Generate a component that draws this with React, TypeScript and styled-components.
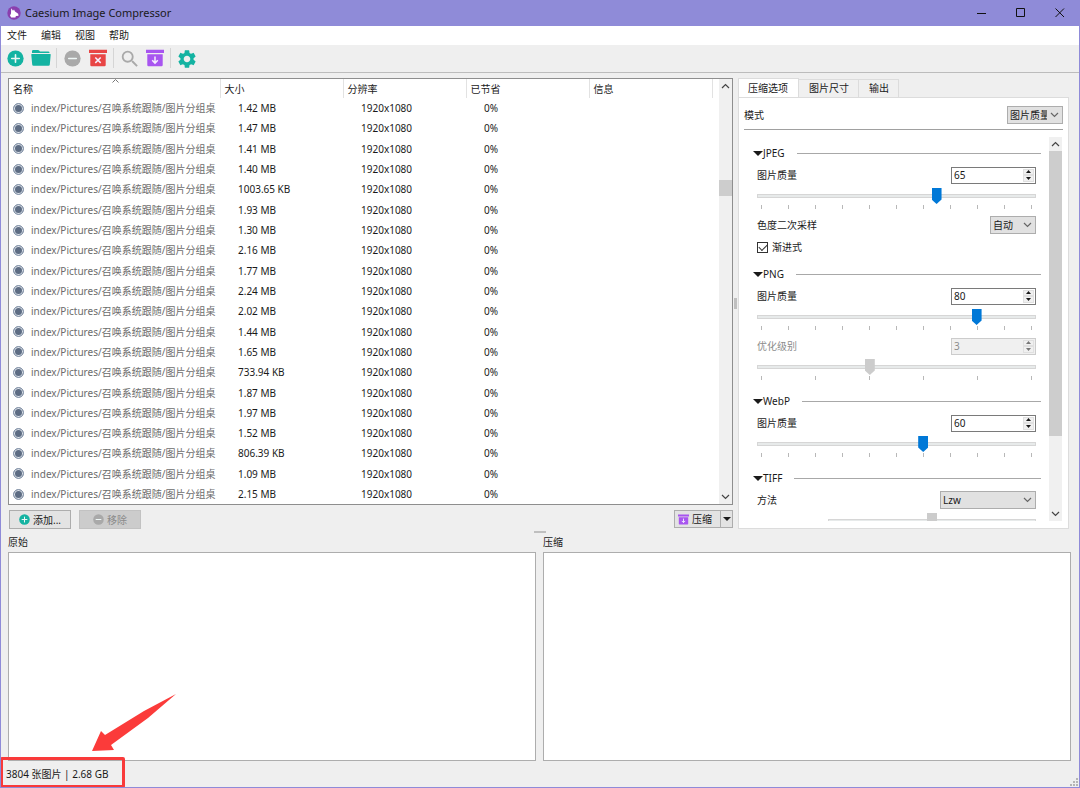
import React, { useState } from 'react';
import styled, { createGlobalStyle, css } from 'styled-components';
import { MdSettings, MdSearch } from 'react-icons/md';

const GlobalStyle = createGlobalStyle`
  * { box-sizing: border-box; }
  body { margin: 0; }
  body, button, input, select {
    font-family: "Noto Sans", "Noto Sans CJK SC", sans-serif;
    font-size: 10px;
    line-height: 14px;
    color: #1a1a1a;
  }
  button, input, select { margin: 0; padding: 0; border: 0; border-radius: 0; background: none; }
`;

const teal = '#14b3a2';
const violet = '#a855f0';
const red = '#e84545';
const grey = '#a9a9a9';

const Window = styled.div`
  display: flex;
  flex-direction: column;
  height: 100vh;
  min-height: 640px;
  min-width: 860px;
  overflow: hidden;
  background: #efefef;
  border: 1px solid #8f8bd8;
  border-top: 0;
`;

const TitleBar = styled.header`
  display: flex;
  align-items: center;
  height: 26px;
  padding-left: 6px;
  background: #8f8bd8;
  flex: none;
`;

const Title = styled.h1`
  flex: 1;
  margin: 0 0 0 4px;
  font-size: 11px;
  font-weight: 400;
  line-height: 16px;
`;

const WindowButton = styled.button`
  display: grid;
  place-items: center;
  width: 39px;
  height: 26px;
`;

const MenuBar = styled.nav`
  display: flex;
  align-items: center;
  gap: 14px;
  height: 19px;
  padding: 0 0 2px 6px;
  background: #fff;
  flex: none;
`;

const MenuItem = styled.button`
  width: 20px;
  white-space: nowrap;
`;

const ToolBar = styled.div`
  display: flex;
  align-items: center;
  height: 28px;
  padding: 0 0 1px 4px;
  border-bottom: 1px solid #bcbcbc;
  flex: none;
`;

const ToolButton = styled.button`
  display: grid;
  place-items: center;
  width: 20px;
  height: 20px;
  & + & { margin-left: 6px; }
`;

const ToolDivider = styled.span`
  width: 1px;
  height: 20px;
  margin: 0 5px;
  background: #d5d5d5;
`;

const Main = styled.main`
  flex: 1;
  display: flex;
  flex-direction: column;
  min-height: 0;
  padding: 5px 8px 0 7px;
`;

const Workspace = styled.section`
  flex: 2 1 0px;
  display: flex;
  min-height: 0;
`;

const FilePane = styled.div`
  flex: 1;
  min-width: 0;
  display: flex;
  flex-direction: column;
  gap: 5px;
`;

const ListFrame = styled.div`
  flex: 1;
  min-height: 0;
  display: flex;
  border: 1px solid #8e8e8e;
  background: #fff;
`;

const ListViewport = styled.div`
  flex: 1;
  min-width: 0;
  overflow: hidden;
`;

const FileTable = styled.table`
  width: 100%;
  height: 100%;
  table-layout: fixed;
  border-collapse: collapse;
`;

const HeadCell = styled.th`
  height: 19px;
  padding: 0 4px;
  text-align: left;
  font-weight: 400;
  border-right: 1px solid #e2e2e2;
  white-space: nowrap;
  &:last-child { border-right: 0; }
`;

const SortMark = styled.svg`
  position: absolute;
  top: 79px;
  left: 112px;
`;

const Cell = styled.td<{ $name?: boolean }>`
  padding: 0 0 0 ${p => (p.$name ? 4 : 18)}px;
  white-space: nowrap;
  overflow: hidden;
  ${p => p.$name && css`color: #6c6c6c;`}
`;

const NameLine = styled.span`
  display: flex;
  align-items: center;
  gap: 7px;
`;

const StateDot = styled.span`
  flex: none;
  width: 11px;
  height: 11px;
  border: 1px solid #8796ab;
  border-radius: 50%;
  background: #5d6c83;
  box-shadow: inset 0 0 0 1px #dfe5ec;
`;

const ScrollTrack = styled.div`
  display: flex;
  flex-direction: column;
  flex: none;
  width: 13px;
  background: #f0f0f0;
`;

const ScrollButton = styled.button`
  display: grid;
  place-items: center;
  height: 14px;
  flex: none;
`;

const ScrollRun = styled.div<{ $before: number; $after: number }>`
  flex: 1;
  display: grid;
  grid-template-rows: ${p => p.$before}fr ${p => 100 - p.$before - p.$after}fr ${p => p.$after}fr;
`;

const ScrollThumb = styled.div`
  grid-row: 2;
  background: #cdcdcd;
`;

const ActionRow = styled.div`
  display: flex;
  gap: 8px;
  padding-left: 1px;
  flex: none;
`;

const PushButton = styled.button`
  display: flex;
  align-items: center;
  justify-content: center;
  gap: 3px;
  width: 62px;
  height: 19px;
  border: 1px solid #adadad;
  background: #e3e3e3;
  &:disabled { color: #8a8a8a; background: #cccccc; border-color: #c2c2c2; }
`;

const SplitButton = styled.div`
  display: flex;
  margin-left: auto;
  height: 18px;
  border: 1px solid #adadad;
  background: #e3e3e3;
`;

const SplitMain = styled.button`
  display: flex;
  align-items: center;
  gap: 3px;
  width: 46px;
  padding-left: 3px;
  border-right: 1px solid #adadad;
`;

const SplitMenu = styled.button`
  display: grid;
  place-items: center;
  width: 11px;
`;

const ColumnSplitter = styled.div`
  display: grid;
  place-items: center;
  width: 5px;
  flex: none;
  &::after { content: ''; width: 3px; height: 11px; background: #bfbfbf; }
`;

const RowSplitter = styled.div`
  display: grid;
  place-items: center;
  height: 6px;
  flex: none;
  &::after { content: ''; width: 12px; height: 2px; background: #bfbfbf; }
`;

const OptionsPane = styled.aside`
  flex: none;
  width: 331px;
  margin-right: 2px;
  display: flex;
  flex-direction: column;
`;

const TabList = styled.div`
  display: flex;
  align-items: flex-end;
  height: 19px;
  flex: none;
`;

const Tab = styled.button<{ $active?: boolean }>`
  height: 18px;
  padding: 0 9px 2px 10px;
  border: 1px solid #dcdcdc;
  border-left-width: 0;
  border-bottom: 0;
  background: #f0f0f0;
  ${p => p.$active && css`
    height: 20px;
    padding: 0 10px 2px 9px;
    margin-bottom: -1px;
    border-left-width: 1px;
    background: #fff;
  `}
`;

const TabPage = styled.div`
  flex: 1;
  min-height: 0;
  display: flex;
  flex-direction: column;
  padding: 7px 5px;
  border: 1px solid #dcdcdc;
  background: #fff;
`;

const ModeRow = styled.div`
  display: flex;
  align-items: center;
  justify-content: space-between;
  height: 25px;
  padding-bottom: 4px;
  border-bottom: 1px solid #a0a0a0;
  flex: none;
`;

const OptionScroll = styled.div`
  flex: 1;
  min-height: 0;
  display: flex;
  margin: 7px 1px 0 0;
`;

const OptionView = styled.div`
  flex: 1;
  min-width: 0;
  overflow: hidden;
  padding: 5px 8px 0 9px;
`;

const Group = styled.section`
  margin-bottom: 5px;
`;

const GroupHead = styled.h2`
  display: flex;
  align-items: center;
  height: 22px;
  margin: 0;
  font-size: 10px;
  font-weight: 400;
  &::after { content: ''; flex: 1; height: 1px; margin-left: 12px; background: #a8a8a8; }
`;

const GroupBody = styled.div`
  padding: 0 5px 0 4px;
`;

const Field = styled.div<{ $muted?: boolean }>`
  display: flex;
  align-items: center;
  justify-content: space-between;
  height: 22px;
  ${p => p.$muted && css`color: #8c8c8c;`}
`;

const CheckField = styled.label`
  display: flex;
  align-items: center;
  gap: 4px;
  height: 22px;
`;

const CheckBox = styled.input`
  appearance: none;
  display: grid;
  place-items: center;
  width: 11px;
  height: 11px;
  border: 1px solid #333;
  background: #fff;
  &:checked::after {
    content: '';
    width: 7px;
    height: 4px;
    border: solid #333;
    border-width: 0 0 1px 1px;
    transform: translateY(-1px) rotate(-45deg);
  }
`;

const SelectBox = styled.span<{ $width: number }>`
  display: grid;
  grid-template-columns: 1fr 16px;
  align-items: center;
  width: ${p => p.$width}px;
  height: 18px;
  border: 1px solid #adadad;
  background: #e1e1e1;
  & > svg { grid-area: 1 / 2; justify-self: center; pointer-events: none; }
`;

const NativeSelect = styled.select`
  grid-area: 1 / 1 / 2 / 3;
  appearance: none;
  width: 100%;
  height: 16px;
  padding: 0 15px 0 2px;
`;

const SpinFrame = styled.span<{ $muted?: boolean }>`
  display: flex;
  width: 85px;
  height: 17px;
  padding: 1px;
  border: 1px solid ${p => (p.$muted ? '#cccccc' : '#7a7a7a')};
  background: ${p => (p.$muted ? '#f0f0f0' : '#fff')};
`;

const SpinInput = styled.input`
  appearance: textfield;
  flex: 1;
  min-width: 0;
  padding-left: 1px;
  &::-webkit-inner-spin-button { display: none; }
  &:disabled { color: #8c8c8c; }
`;

const SpinButtons = styled.span`
  display: grid;
  grid-template-rows: 1fr 1fr;
  width: 11px;
`;

const SpinButton = styled.button`
  display: grid;
  place-items: center;
  min-height: 0;
  border: 1px solid #e0e0e0;
  background: #f0f0f0;
  &:disabled { color: #777; }
`;

const SliderBlock = styled.div`
  height: 28px;
  padding-top: 2px;
`;

const Range = styled.input`
  appearance: none;
  display: block;
  width: 100%;
  height: 16px;
  &::-webkit-slider-runnable-track {
    height: 4px;
    background: #e7eaea;
    border: 1px solid #d6d6d6;
  }
  &::-webkit-slider-thumb {
    appearance: none;
    width: 10px;
    height: 16px;
    margin-top: -7px;
    background: #0078d7;
    clip-path: polygon(0 0, 100% 0, 100% 72%, 50% 100%, 0 72%);
  }
  &:disabled::-webkit-slider-thumb { background: #cccccc; }
`;

const Ticks = styled.div`
  display: flex;
  justify-content: space-between;
  padding: 1px 4px 0;
  & > i { width: 1px; height: 4px; background: #b8b8b8; }
`;

const InsetSlider = styled.div`
  padding-left: 71px;
`;

const PreviewArea = styled.section`
  flex: 1 1 0px;
  display: flex;
  gap: 7px;
  min-height: 120px;
`;

const Preview = styled.figure`
  flex: 1;
  display: flex;
  flex-direction: column;
  margin: 0;
`;

const PreviewLabel = styled.figcaption`
  height: 17px;
`;

const PreviewCanvas = styled.div`
  flex: 1;
  border: 1px solid #adadad;
  background: #fff;
`;

const StatusBar = styled.footer`
  position: relative;
  display: flex;
  align-items: center;
  justify-content: space-between;
  height: 26px;
  padding-left: 5px;
  flex: none;
`;

const Callout = styled.div`
  position: absolute;
  left: -1px;
  bottom: -1px;
  width: 125px;
  height: 31px;
  border: 3px solid #f93a3a;
  border-radius: 2px;
`;

const CalloutArrow = styled.svg`
  position: absolute;
  left: 90px;
  bottom: 35px;
`;

const Grip = styled.svg`
  align-self: flex-end;
`;

const sizes = ['1.42 MB', '1.47 MB', '1.41 MB', '1.40 MB', '1003.65 KB', '1.93 MB', '1.30 MB', '2.16 MB', '1.77 MB', '2.24 MB',
  '2.02 MB', '1.44 MB', '1.65 MB', '733.94 KB', '1.87 MB', '1.97 MB', '1.52 MB', '806.39 KB', '1.09 MB', '2.15 MB'];

const CircleIcon = ({ size, color, plus }: { size: number; color: string; plus?: boolean }) => (
  <svg width={size} height={size} viewBox="0 0 18 18">
    <circle cx="9" cy="9" r="8.6" fill={color} />
    <path d={plus ? 'M5 9h8M9 5v8' : 'M5 9h8'} stroke="#eef6f5" strokeWidth="1.7" strokeLinecap="round" />
  </svg>
);

const FolderIcon = () => (
  <svg width="20" height="18" viewBox="0 0 20 18" fill={teal}>
    <path d="M1 4V2.2Q1 1 2.2 1H7q.7 0 1.1.5l.9.9h8.2q1.3 0 1.3 1.3V4z" />
    <path d="M.8 5h18.4q.6 0 .5.7l-.9 9.8q-.1 1.2-1.3 1.2h-15q-1.2 0-1.3-1.2L.3 5.7Q.2 5 .8 5z" />
  </svg>
);

const BinIcon = ({ size, color, arrow }: { size: number; color: string; arrow?: boolean }) => (
  <svg width={size} height={size} viewBox="0 0 18 18">
    <path d="M0 .8h18v3.3H0zM1.3 5.2h15.4v10.900q0 1.2-1.2 1.2h-13q-1.2 0-1.2-1.2z" fill={color} />
    <path d={arrow ? 'M9 7.5v6.5M6.2 11.3L9 14.1l2.8-2.8' : 'M6.3 8.5l5.4 5.4M11.7 8.5l-5.4 5.4'} stroke="#f6efff" strokeWidth="1.5" fill="none" />
  </svg>
);

const AppIcon = () => (
  <svg width="14" height="14" viewBox="0 0 14 14">
    <circle cx="7" cy="7" r="6.7" fill="#8a3fae" />
    <path d="M4.200 2.200l1.800 2.600 1-1.200 1 2 3.200 2.200.3 1.900-2.600.4-.5 1.300H4.200L3 9.600l1-2z" fill="#fff" />
  </svg>
);

const Chevron = ({ up, color = '#444' }: { up?: boolean; color?: string }) => (
  <svg width="9" height="6" viewBox="0 0 9 6" fill="none" stroke={color} strokeWidth="1.2">
    <path d={up ? 'M1 5l3.500-3.500L8 5' : 'M1 1l3.500 3.500L8 1'} />
  </svg>
);

const Triangle = ({ w, h, up }: { w: number; h: number; up?: boolean }) => (
  <svg width={w} height={h} viewBox="0 0 10 5" preserveAspectRatio="none">
    <path d={up ? 'M0 5h10L5 0z' : 'M0 0h10L5 5z'} fill="currentColor" />
  </svg>
);

function ScrollBar({ before, after, label }: { before: number; after: number; label: string }) {
  return (
    <ScrollTrack>
      <ScrollButton aria-label={`${label} ▲`}><Chevron up /></ScrollButton>
      <ScrollRun $before={before} $after={after}><ScrollThumb /></ScrollRun>
      <ScrollButton aria-label={`${label} ▼`}><Chevron /></ScrollButton>
    </ScrollTrack>
  );
}

function Drop({ id, width, value }: { id: string; width: number; value: string }) {
  return (
    <SelectBox $width={width}>
      <NativeSelect id={id} defaultValue={value}>
        <option>{value}</option>
      </NativeSelect>
      <Chevron color="#666" />
    </SelectBox>
  );
}

interface LevelProps { id: string; label: string; initial: number; min?: number; max?: number; ticks?: number; disabled?: boolean }

function Level({ id, label, initial, min = 0, max = 100, ticks = 11, disabled }: LevelProps) {
  const [value, setValue] = useState(initial);
  const step = (by: number) => setValue(v => Math.min(max, Math.max(min, v + by)));
  return (
    <>
      <Field $muted={disabled}>
        <label htmlFor={id}>{label}</label>
        <SpinFrame $muted={disabled}>
          <SpinInput id={id} type="number" min={min} max={max} value={value} disabled={disabled} onChange={e => setValue(Number(e.target.value))} />
          <SpinButtons>
            <SpinButton aria-label="+" disabled={disabled} onClick={() => step(1)}><Triangle w={5} h={3} up /></SpinButton>
            <SpinButton aria-label="-" disabled={disabled} onClick={() => step(-1)}><Triangle w={5} h={3} /></SpinButton>
          </SpinButtons>
        </SpinFrame>
      </Field>
      <SliderBlock>
        <Range type="range" aria-label={label} min={min} max={max} value={value} disabled={disabled} onChange={e => setValue(Number(e.target.value))} />
        <Ticks>{Array.from({ length: ticks }, (_, i) => <i key={i} />)}</Ticks>
      </SliderBlock>
    </>
  );
}

function OptionGroup({ title, children }: { title: string; children: React.ReactNode }) {
  return (
    <Group>
      <GroupHead><Triangle w={10} h={5} />{title}</GroupHead>
      <GroupBody>{children}</GroupBody>
    </Group>
  );
}

export default function App() {
  return (
    <Window>
      <GlobalStyle />
      <TitleBar>
        <AppIcon />
        <Title>Caesium Image Compressor</Title>
        <WindowButton aria-label="最小化"><svg width="10" height="10"><path d="M0 5.5h9" stroke="#111" /></svg></WindowButton>
        <WindowButton aria-label="最大化"><svg width="10" height="10"><path d="M.5.5h8v8h-8z" stroke="#111" fill="none" /></svg></WindowButton>
        <WindowButton aria-label="关闭"><svg width="10" height="10"><path d="M.5.5l8.5 8.5M9 .5L.5 9" stroke="#111" /></svg></WindowButton>
      </TitleBar>
      <MenuBar>
        {['文件', '编辑', '视图', '帮助'].map(m => <MenuItem key={m}>{m}</MenuItem>)}
      </MenuBar>
      <ToolBar>
        <ToolButton aria-label="添加文件"><CircleIcon size={17} color={teal} plus /></ToolButton>
        <ToolButton aria-label="添加文件夹"><FolderIcon /></ToolButton>
        <ToolDivider />
        <ToolButton aria-label="移除"><CircleIcon size={17} color={grey} /></ToolButton>
        <ToolButton aria-label="清空"><BinIcon size={18} color={red} /></ToolButton>
        <ToolDivider />
        <ToolButton aria-label="搜索"><MdSearch size={22} color={grey} /></ToolButton>
        <ToolButton aria-label="压缩"><BinIcon size={18} color={violet} arrow /></ToolButton>
        <ToolDivider />
        <ToolButton aria-label="设置"><MdSettings size={22} color={teal} /></ToolButton>
      </ToolBar>
      <Main>
        <Workspace>
          <FilePane>
            <ListFrame>
              <ListViewport>
                <SortMark width="7" height="4" fill="none" stroke="#777"><path d="M.5 3.5l3-3 3 3" /></SortMark>
                <FileTable>
                  <colgroup>
                    <col /><col width="123" /><col width="123" /><col width="123" /><col width="123" /><col width="7" />
                  </colgroup>
                  <thead>
                    <tr>
                      {['名称', '大小', '分辨率', '已节省', '信息', ''].map(h => <HeadCell key={h}>{h}</HeadCell>)}
                    </tr>
                  </thead>
                  <tbody>
                    {sizes.map((size, i) => (
                      <tr key={i}>
                        <Cell $name><NameLine><StateDot />index/Pictures/召唤系统跟随/图片分组桌</NameLine></Cell>
                        <Cell>{size}</Cell>
                        <Cell>1920x1080</Cell>
                        <Cell>0%</Cell>
                        <Cell />
                        <Cell />
                      </tr>
                    ))}
                  </tbody>
                </FileTable>
              </ListViewport>
              <ScrollBar before={22} after={74} label="列表" />
            </ListFrame>
            <ActionRow>
              <PushButton><CircleIcon size={11} color={teal} plus />添加...</PushButton>
              <PushButton disabled><CircleIcon size={11} color={grey} />移除</PushButton>
              <SplitButton>
                <SplitMain><BinIcon size={11} color={violet} arrow />压缩</SplitMain>
                <SplitMenu aria-label="压缩选项"><Triangle w={8} h={4} /></SplitMenu>
              </SplitButton>
            </ActionRow>
          </FilePane>
          <ColumnSplitter />
          <OptionsPane>
            <TabList role="tablist">
              <Tab role="tab" aria-selected $active>压缩选项</Tab>
              <Tab role="tab">图片尺寸</Tab>
              <Tab role="tab">输出</Tab>
            </TabList>
            <TabPage>
              <ModeRow>
                <label htmlFor="mode">模式</label>
                <Drop id="mode" width={56} value="图片质量" />
              </ModeRow>
              <OptionScroll>
                <OptionView>
                  <OptionGroup title="JPEG">
                    <Level id="jpeg" label="图片质量" initial={65} />
                    <Field>
                      <label htmlFor="chroma">色度二次采样</label>
                      <Drop id="chroma" width={46} value="自动" />
                    </Field>
                    <CheckField><CheckBox type="checkbox" defaultChecked />渐进式</CheckField>
                  </OptionGroup>
                  <OptionGroup title="PNG">
                    <Level id="png" label="图片质量" initial={80} />
                    <Level id="pnglevel" label="优化级别" initial={3} min={1} max={6} ticks={6} disabled />
                  </OptionGroup>
                  <OptionGroup title="WebP">
                    <Level id="webp" label="图片质量" initial={60} />
                  </OptionGroup>
                  <OptionGroup title="TIFF">
                    <Field>
                      <label htmlFor="tiff">方法</label>
                      <Drop id="tiff" width={96} value="Lzw" />
                    </Field>
                    <InsetSlider>
                      <SliderBlock><Range type="range" aria-label="TIFF" defaultValue={50} disabled /></SliderBlock>
                    </InsetSlider>
                  </OptionGroup>
                </OptionView>
                <ScrollBar before={0} after={20} label="选项" />
              </OptionScroll>
            </TabPage>
          </OptionsPane>
        </Workspace>
        <RowSplitter />
        <PreviewArea>
          <Preview><PreviewLabel>原始</PreviewLabel><PreviewCanvas /></Preview>
          <Preview><PreviewLabel>压缩</PreviewLabel><PreviewCanvas /></Preview>
        </PreviewArea>
      </Main>
      <StatusBar>
        <span>3804 张图片 | 2.68 GB</span>
        <Grip width="9" height="9" fill="#b5b5b5">
          <path d="M6 0h2v2H6zM6 3h2v2H6zM3 3h2v2H3zM6 6h2v2H6zM3 6h2v2H3zM0 6h2v2H0z" />
        </Grip>
        <Callout />
        <CalloutArrow width="86" height="58" viewBox="0 0 86 58">
          <path d="M85 0L53 17 14 41 10 37 1 57 23 56 20 51 57 24z" fill="#fb3b3a" />
        </CalloutArrow>
      </StatusBar>
    </Window>
  );
}
